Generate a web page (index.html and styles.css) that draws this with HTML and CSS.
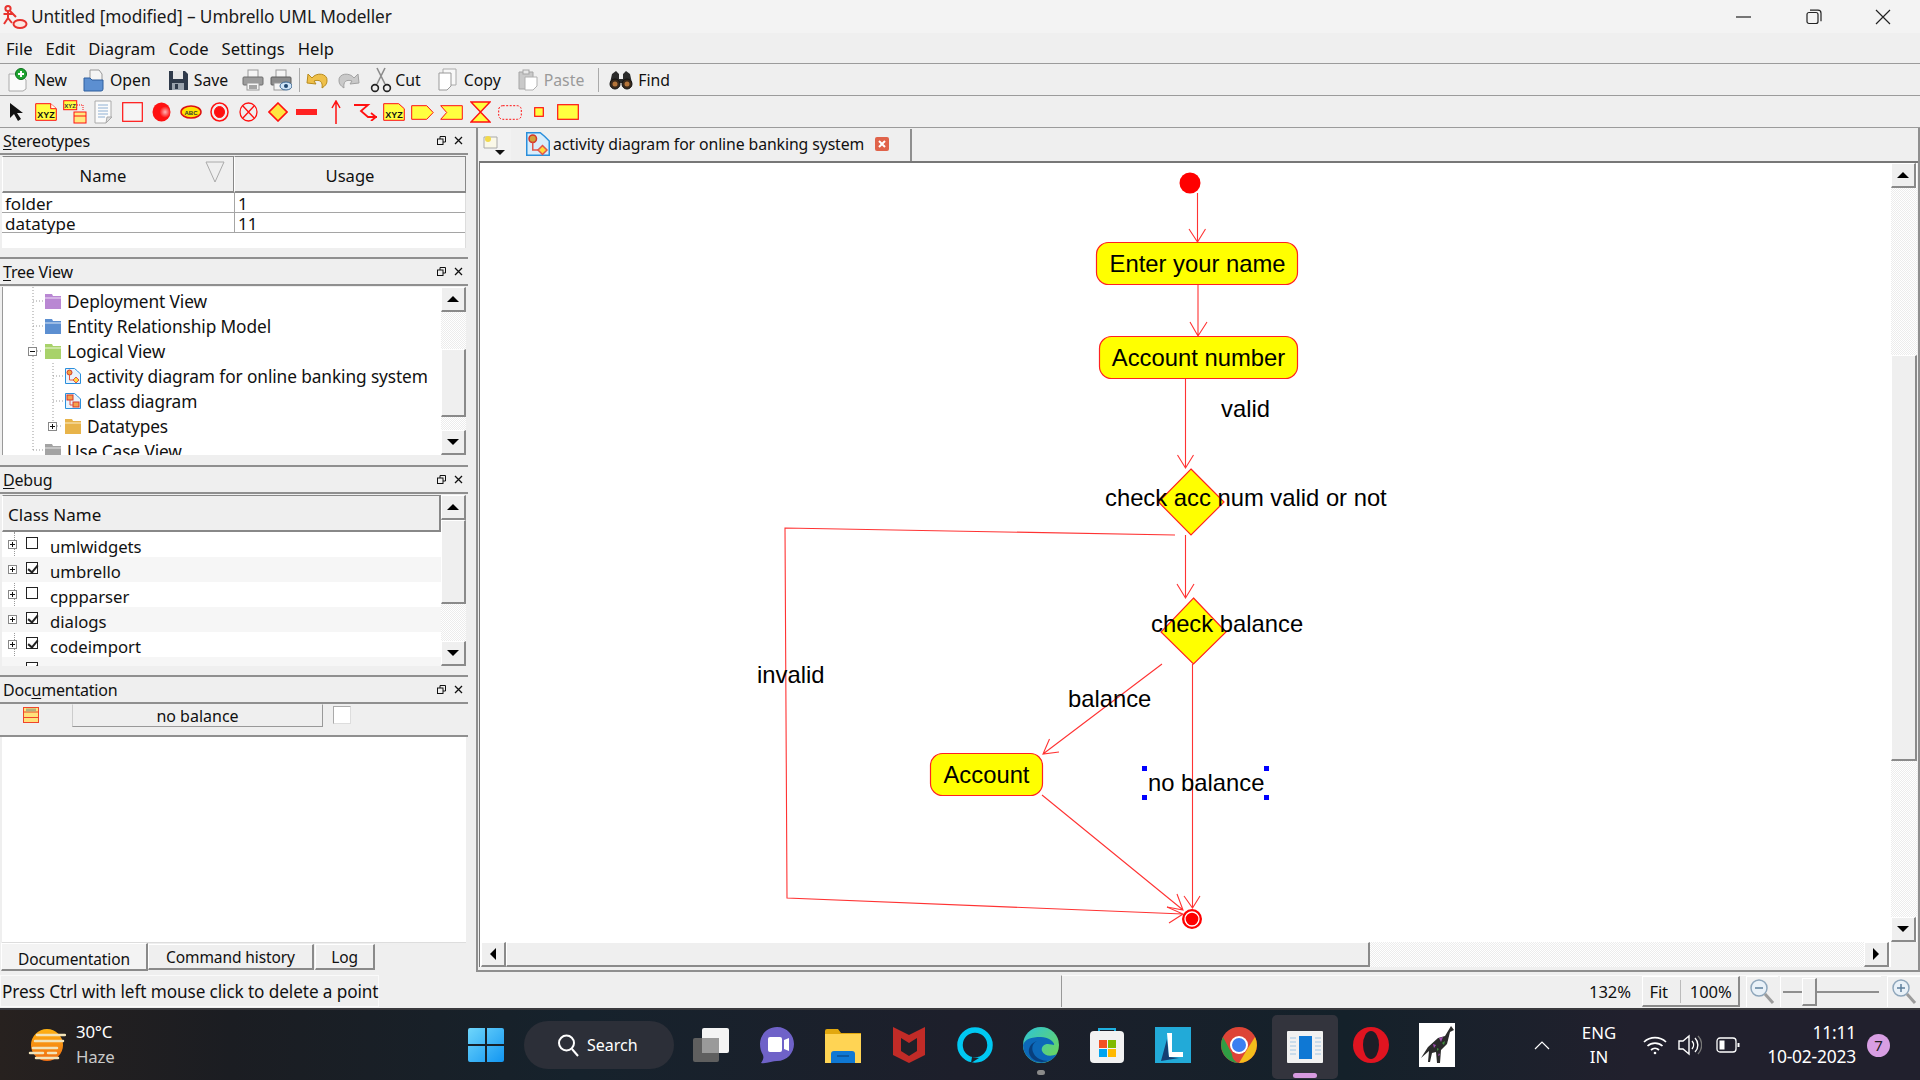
FILE: index.html
```html
<!DOCTYPE html>
<html lang="en">
<head>
<meta charset="utf-8">
<title>Untitled [modified] – Umbrello UML Modeller</title>
<link rel="stylesheet" href="styles.css">
</head>
<body>
<div class="titlebar">
  <svg class="app-icon" width="26" height="26" viewBox="0 0 26 26" fill="none" stroke="#e8332e" stroke-width="2"><circle cx="6" cy="4.5" r="2.6"/><path d="M6 7v7M1.5 10h9M6 14l-4 6M6 14l4 5M8 7l6 6"/><ellipse cx="18" cy="20" rx="6.5" ry="4" fill="#fde6e0"/></svg>
  <span class="title-text">Untitled [modified] – Umbrello UML Modeller</span>
  <div class="win-controls">
    <svg width="16" height="16" viewBox="0 0 16 16"><path d="M0 8h15" stroke="#222" stroke-width="1.2"/></svg>
    <svg width="16" height="16" viewBox="0 0 16 16" fill="none" stroke="#222" stroke-width="1.2"><rect x="1" y="3.5" width="11" height="11" rx="2"/><path d="M4 1.2h8a3 3 0 0 1 3 3v8"/></svg>
    <svg width="16" height="16" viewBox="0 0 16 16"><path d="M1 1l14 14M15 1L1 15" stroke="#222" stroke-width="1.2"/></svg>
  </div>
</div>
<div class="menubar">
  <span>File</span><span>Edit</span><span>Diagram</span><span>Code</span><span>Settings</span><span>Help</span>
</div>
<div class="toolbar">
  <div class="tb-group tb-wide">
    <div class="tb-item"><svg width="22" height="24" viewBox="0 0 22 24"><path d="M2 6h11l6 6v9l-3 2H2z" fill="#fafafa" stroke="#aaa"/><circle cx="14" cy="6" r="5.5" fill="#1fa531" stroke="#0c6f1b"/><path d="M14 3v6M11 6h6" stroke="#fff" stroke-width="2"/></svg><span>New</span></div>
    <div class="tb-item"><svg width="22" height="24" viewBox="0 0 22 24"><path d="M7 2h9l3 4v8H7z" fill="#f5f5f5" stroke="#999"/><path d="M1 10h6l2 2h11v9a2 2 0 0 1-2 2H1z" fill="#5c8fd1" stroke="#2e5f9e"/></svg><span>Open</span></div>
    <div class="tb-item"><svg width="22" height="24" viewBox="0 0 22 24"><path d="M2 3h16l3 3v16H2z" fill="#2f3a4a"/><rect x="6" y="3" width="10" height="8" fill="#e6e6e6"/><rect x="5" y="15" width="12" height="7" fill="#9aa3ad"/><rect x="8" y="16" width="3" height="5" fill="#2f3a4a"/></svg><span>Save</span></div>
  </div>
  <div class="tb-group tb-narrow tb-print">
    <svg width="22" height="24" viewBox="0 0 22 24"><rect x="6" y="2" width="10" height="8" fill="#f5f5f5" stroke="#999"/><rect x="1" y="9" width="20" height="8" rx="1" fill="#9c9c9c" stroke="#6e6e6e"/><rect x="5" y="15" width="12" height="7" fill="#f5f5f5" stroke="#999"/><path d="M7 18h8M7 20h8" stroke="#555"/></svg>
    <svg width="22" height="24" viewBox="0 0 22 24"><rect x="6" y="2" width="10" height="8" fill="#f5f5f5" stroke="#999"/><rect x="1" y="9" width="20" height="8" rx="1" fill="#8c8c8c" stroke="#5e5e5e"/><rect x="4" y="15" width="10" height="7" fill="#f5f5f5" stroke="#999"/><ellipse cx="16" cy="18" rx="6" ry="4" fill="#cfe4f7" stroke="#39638e"/><circle cx="16" cy="18" r="2" fill="#21476f"/></svg>
  </div>
  <div class="tb-sep tb-sep-a"></div>
  <div class="tb-group tb-narrow tb-undo">
    <svg width="24" height="24" viewBox="0 0 24 24" fill="none"><path d="M6 10c4-6 16-5 15 3 0 3-2 5-5 7 1-6-2-9-8-7l2 3-9-1 1-9z" fill="#efc04a" stroke="#b88b1d"/></svg>
    <svg width="24" height="24" viewBox="0 0 24 24" fill="none"><path d="M18 10C14 4 2 5 3 13c0 3 2 5 5 7-1-6 2-9 8-7l-2 3 9-1-1-9z" fill="#c9c9c9" stroke="#a2a2a2"/></svg>
  </div>
  <div class="tb-group tb-wide tb-edit">
    <div class="tb-item tb-close"><svg width="22" height="26" viewBox="0 0 22 26" fill="none" stroke="#8b8b8b" stroke-width="1.6"><path d="M7 1l8 16M15 1L7 17"/><circle cx="5" cy="21" r="3.4" stroke="#222"/><circle cx="17" cy="21" r="3.4" stroke="#222"/></svg><span>Cut</span></div>
    <div class="tb-item"><svg width="22" height="24" viewBox="0 0 22 24"><path d="M6 1h13v16H6z" fill="#f8f8f8" stroke="#aaa"/><path d="M2 5h12v13l-4 4H2z" fill="#fff" stroke="#999"/></svg><span>Copy</span></div>
    <div class="tb-item tb-off"><svg width="22" height="24" viewBox="0 0 22 24"><path d="M2 4h14v17H2z" fill="#c9c9c9" stroke="#a5a5a5"/><rect x="6" y="2" width="6" height="4" fill="#e8e8e8" stroke="#a5a5a5"/><path d="M8 9h12v9l-4 4H8z" fill="#fff" stroke="#b0b0b0"/></svg><span>Paste</span></div>
  </div>
  <div class="tb-sep tb-sep-b"></div>
  <div class="tb-item tb-find"><svg width="24" height="22" viewBox="0 0 24 22"><path d="M3 5l4-3 3 3v5h4V5l3-3 4 3 2 9H1z" fill="#2b2b2b"/><circle cx="6" cy="15" r="5" fill="#3a2a1c" stroke="#111"/><circle cx="18" cy="15" r="5" fill="#3a2a1c" stroke="#111"/><circle cx="6" cy="15" r="2.5" fill="#b5753a"/><circle cx="18" cy="15" r="2.5" fill="#b5753a"/></svg><span>Find</span></div>
</div>
<div class="palette">
  <div class="pal"><svg width="15" height="20" viewBox="0 0 15 20"><path d="M1 1v15l4-4 4 7 3-2-4-6h6z" fill="#111"/></svg></div>
  <div class="pal"><svg width="22" height="18" viewBox="0 0 22 18"><path d="M.7.7h15l5.600 5v11.600H.7z" fill="#ffff40" stroke="#f11"/><path d="M15.700.7v5h5.600" fill="#ffe" stroke="#f11"/><text x="11" y="15" class="xyz">XYZ</text></svg></div>
  <div class="pal"><svg width="24" height="24" viewBox="0 0 24 24"><rect x=".7" y=".7" width="13" height="9" fill="#ffff40" stroke="#f11"/><text x="7" y="8" class="xyz-s">XYZ</text><path d="M14 5h6v6" fill="none" stroke="#f11" stroke-dasharray="1 1"/><rect x="11" y="12" width="12" height="11" fill="#ffe980" stroke="#f11"/><path d="M11 16h12" stroke="#f11"/></svg></div>
  <div class="pal"><svg width="20" height="24" viewBox="0 0 20 24"><path d="M1 1h16v16l-5 6H1z" fill="#fbfbfb" stroke="#aaa"/><path d="M4 5h10M4 8h10M4 11h10M4 14h10M4 17h7" stroke="#8fb0d3"/><path d="M12 23l1-6h5z" fill="#ddd" stroke="#aaa"/></svg></div>
  <div class="pal"><svg width="21" height="20" viewBox="0 0 21 20"><rect x=".7" y=".7" width="19.600" height="18.600" fill="#f5f5f5" stroke="#f11" stroke-width="1.200"/></svg></div>
  <div class="pal"><svg width="19" height="20" viewBox="0 0 19 20"><defs><radialGradient id="rb" cx=".7" cy=".5"><stop offset="0" stop-color="#ffb5b5"/><stop offset=".6" stop-color="#f11"/></radialGradient></defs><ellipse cx="9.500" cy="10" rx="9" ry="9.500" fill="url(#rb)"/></svg></div>
  <div class="pal"><svg width="22" height="14" viewBox="0 0 22 14"><ellipse cx="11" cy="7" rx="10" ry="6" fill="#ffe300" stroke="#d11" stroke-width="1.500"/><text x="11" y="10" class="xyz-s">ABC</text></svg></div>
  <div class="pal"><svg width="19" height="20" viewBox="0 0 19 20" fill="none" stroke="#f11"><ellipse cx="9.500" cy="10" rx="8.500" ry="9" stroke-width="1.500"/><ellipse cx="9.500" cy="10" rx="5" ry="5.500" fill="#f11"/></svg></div>
  <div class="pal"><svg width="19" height="20" viewBox="0 0 19 20" fill="none" stroke="#f11" stroke-width="1.300"><ellipse cx="9.500" cy="10" rx="8.500" ry="9"/><path d="M3.500 3.500l12 13M15.500 3.500l-12 13"/></svg></div>
  <div class="pal"><svg width="20" height="20" viewBox="0 0 20 20"><path d="M10 1l9 9-9 9-9-9z" fill="#ffe640" stroke="#f11" stroke-width="1.600"/></svg></div>
  <div class="pal"><svg width="21" height="6" viewBox="0 0 21 6"><rect width="21" height="6" fill="#f22"/></svg></div>
  <div class="pal"><svg width="10" height="24" viewBox="0 0 10 24" fill="none" stroke="#f11" stroke-width="1.500"><path d="M5 24V1M1 8l4-7 4 7"/></svg></div>
  <div class="pal"><svg width="24" height="18" viewBox="0 0 24 18" fill="none" stroke="#f11" stroke-width="1.800"><path d="M1 2h14l-7 6 7 6h9M18 10l5 4-5 4"/></svg></div>
  <div class="pal"><svg width="22" height="18" viewBox="0 0 22 18"><path d="M.7.7h15l5.600 5v11.600H.7z" fill="#ffff40" stroke="#f11"/><text x="11" y="15" class="xyz">XYZ</text></svg></div>
  <div class="pal"><svg width="23" height="15" viewBox="0 0 23 15"><path d="M.7.7h15l6.500 6.800-6.500 6.800H.7z" fill="#ffff40" stroke="#f11"/></svg></div>
  <div class="pal"><svg width="23" height="15" viewBox="0 0 23 15"><path d="M.7.7h21.600v13.600H.7l6-6.800z" fill="#ffff40" stroke="#f11"/></svg></div>
  <div class="pal"><svg width="21" height="22" viewBox="0 0 21 22"><path d="M1 1h19L1 21h19z" fill="#ffff40" stroke="#f11" stroke-width="1.400"/></svg></div>
  <div class="pal"><svg width="24" height="15" viewBox="0 0 24 15"><rect x=".7" y=".7" width="22.600" height="13.600" rx="4" fill="none" stroke="#f11" stroke-dasharray="2 1.500"/></svg></div>
  <div class="pal"><svg width="10" height="10" viewBox="0 0 10 10"><rect x=".7" y=".7" width="8.600" height="8.600" fill="#ffff40" stroke="#f11" stroke-width="1.200"/></svg></div>
  <div class="pal"><svg width="22" height="16" viewBox="0 0 22 16"><rect x=".7" y=".7" width="20.600" height="14.600" fill="#ffff40" stroke="#f11" stroke-width="1.200"/></svg></div>
</div>

<div class="work">
  <div class="docks">
    <section class="dock dock-stereo">
      <header class="dock-head"><span><u>S</u>tereotypes</span><div class="dock-btns"><svg width="9" height="9" viewBox="0 0 9 9" fill="none" stroke="#111"><rect x=".5" y="3" width="5.500" height="5.500"/><path d="M3 3V.5h5.500V6H6"/></svg><svg width="9" height="9" viewBox="0 0 9 9"><path d="M1 1l7 7M8 1L1 8" stroke="#111" stroke-width="1.300"/></svg></div></header>
      <div class="stereo-panel">
        <div class="table-head">
          <div class="th th-name">Name<svg class="sort" width="20" height="22" viewBox="0 0 20 22"><path d="M1 1h18l-9 20z" fill="none" stroke="#aaa"/></svg></div>
          <div class="th">Usage</div>
        </div>
        <div class="table-row"><div class="td">folder</div><div class="td">1</div></div>
        <div class="table-row"><div class="td">datatype</div><div class="td">11</div></div>
      </div>
    </section>

    <section class="dock dock-tree">
      <header class="dock-head"><span><u>T</u>ree View</span><div class="dock-btns"><svg width="9" height="9" viewBox="0 0 9 9" fill="none" stroke="#111"><rect x=".5" y="3" width="5.500" height="5.500"/><path d="M3 3V.5h5.500V6H6"/></svg><svg width="9" height="9" viewBox="0 0 9 9"><path d="M1 1l7 7M8 1L1 8" stroke="#111" stroke-width="1.300"/></svg></div></header>
      <div class="tree-panel">
        <div class="tree-list">
          <svg class="tree-lines" width="80" height="168" viewBox="0 0 80 168" fill="none" stroke="#999" stroke-dasharray="1 2"><path d="M33 0v163M33 14h10M33 39h10M37 64h6M33 163h10M53 76v63M53 89h10M53 114h10M57 139h6"/></svg>
          <div class="tree-row lvl1"><svg class="folder" width="16" height="16" viewBox="0 0 16 16"><path d="M0 1h7l1 2h8v13H0z" fill="#b987d3"/><path d="M0 5h16" stroke="#f0e0f8"/></svg>Deployment View</div>
          <div class="tree-row lvl1"><svg class="folder" width="16" height="16" viewBox="0 0 16 16"><path d="M0 1h7l1 2h8v13H0z" fill="#5c8fd1"/><path d="M0 5h16" stroke="#dbe8f8"/></svg>Entity Relationship Model</div>
          <div class="tree-row lvl1"><svg class="pm" width="9" height="9" viewBox="0 0 9 9"><rect x=".5" y=".5" width="8" height="8" fill="#fff" stroke="#888"/><path d="M2 4.500h5" stroke="#111"/></svg><svg class="folder" width="16" height="16" viewBox="0 0 16 16"><path d="M0 1h7l1 2h8v13H0z" fill="#a8d26a"/><path d="M0 5h16" stroke="#eef8dc"/></svg>Logical View</div>
          <div class="tree-row lvl2"><svg class="folder" width="16" height="16" viewBox="0 0 16 16"><path d="M.5.500h9l3 2.500 3 3v9.500H.5z" fill="#e8f3fc" stroke="#2a8fdc"/><circle cx="4.500" cy="4.500" r="2.500" fill="#f2a13a" stroke="#d3372c"/><path d="M4.500 7v5h5" stroke="#e2554a" fill="none"/><path d="M11 9l3 3-3 3-3-3z" fill="#ffd83a" stroke="#e2554a"/></svg>activity diagram for online banking system</div>
          <div class="tree-row lvl2"><svg class="folder" width="16" height="16" viewBox="0 0 16 16"><path d="M.5.500h9l3 2.500 3 3v9.500H.5z" fill="#e8f3fc" stroke="#2a8fdc"/><rect x="2" y="2" width="6" height="5" fill="#f5a24d" stroke="#d3372c"/><rect x="8" y="9" width="6" height="5" fill="#f5a24d" stroke="#d3372c"/><path d="M5 7v5h3" stroke="#e2554a" fill="none"/></svg>class diagram</div>
          <div class="tree-row lvl2"><svg class="pm" width="9" height="9" viewBox="0 0 9 9"><rect x=".5" y=".5" width="8" height="8" fill="#fff" stroke="#888"/><path d="M2 4.500h5M4.500 2v5" stroke="#111"/></svg><svg class="folder" width="16" height="16" viewBox="0 0 16 16"><path d="M0 1h7l1 2h8v13H0z" fill="#e8b44a"/><path d="M0 5h16" stroke="#fbeec9"/></svg>Datatypes</div>
          <div class="tree-row lvl1"><svg class="folder" width="16" height="16" viewBox="0 0 16 16"><path d="M0 1h7l1 2h8v13H0z" fill="#a3a3a3"/><path d="M0 5h16" stroke="#e6e6e6"/></svg>Use Case View</div>
        </div>
        <div class="vbar">
          <div class="sb-btn tri-up"></div><div class="hatch hatch-tree"></div><div class="thumb thumb-tree"></div><div class="hatch hatch-fill"></div><div class="sb-btn tri-down"></div>
        </div>
      </div>
    </section>

    <section class="dock dock-debug">
      <header class="dock-head"><span><u>D</u>ebug</span><div class="dock-btns"><svg width="9" height="9" viewBox="0 0 9 9" fill="none" stroke="#111"><rect x=".5" y="3" width="5.500" height="5.500"/><path d="M3 3V.5h5.500V6H6"/></svg><svg width="9" height="9" viewBox="0 0 9 9"><path d="M1 1l7 7M8 1L1 8" stroke="#111" stroke-width="1.300"/></svg></div></header>
      <div class="debug-panel">
        <div class="debug-list">
          <div class="debug-head">Class Name</div>
          <div class="debug-row"><svg class="pm" width="9" height="9" viewBox="0 0 9 9"><rect x=".5" y=".5" width="8" height="8" fill="#fff" stroke="#888"/><path d="M2 4.500h5M4.500 2v5" stroke="#111"/></svg><span class="cb"></span>umlwidgets</div>
          <div class="debug-row alt"><svg class="pm" width="9" height="9" viewBox="0 0 9 9"><rect x=".5" y=".5" width="8" height="8" fill="#fff" stroke="#888"/><path d="M2 4.500h5M4.500 2v5" stroke="#111"/></svg><span class="cb checked"></span>umbrello</div>
          <div class="debug-row"><svg class="pm" width="9" height="9" viewBox="0 0 9 9"><rect x=".5" y=".5" width="8" height="8" fill="#fff" stroke="#888"/><path d="M2 4.500h5M4.500 2v5" stroke="#111"/></svg><span class="cb"></span>cppparser</div>
          <div class="debug-row alt"><svg class="pm" width="9" height="9" viewBox="0 0 9 9"><rect x=".5" y=".5" width="8" height="8" fill="#fff" stroke="#888"/><path d="M2 4.500h5M4.500 2v5" stroke="#111"/></svg><span class="cb checked"></span>dialogs</div>
          <div class="debug-row"><svg class="pm" width="9" height="9" viewBox="0 0 9 9"><rect x=".5" y=".5" width="8" height="8" fill="#fff" stroke="#888"/><path d="M2 4.500h5M4.500 2v5" stroke="#111"/></svg><span class="cb checked"></span>codeimport</div>
          <div class="debug-row alt"><span class="pm-space"></span><span class="cb checked"></span>refactoring</div>
        </div>
        <div class="vbar">
          <div class="sb-btn tri-up"></div><div class="thumb thumb-debug"></div><div class="hatch hatch-fill"></div><div class="sb-btn tri-down"></div>
        </div>
      </div>
    </section>

    <section class="dock dock-doc">
      <header class="dock-head"><span>Doc<u>u</u>mentation</span><div class="dock-btns"><svg width="9" height="9" viewBox="0 0 9 9" fill="none" stroke="#111"><rect x=".5" y="3" width="5.500" height="5.500"/><path d="M3 3V.5h5.500V6H6"/></svg><svg width="9" height="9" viewBox="0 0 9 9"><path d="M1 1l7 7M8 1L1 8" stroke="#111" stroke-width="1.300"/></svg></div></header>
      <div class="doc-bar">
        <svg class="doc-icon" width="16" height="16" viewBox="0 0 16 16"><rect x=".5" y=".5" width="15" height="15" fill="#ffe27a" stroke="#f0452a"/><path d="M.5 5h15M.5 10.500h15" stroke="#f0452a"/><rect x="3" y="1.500" width="10" height="3" fill="#b5b07c"/></svg>
        <div class="doc-name">no balance</div>
        <span class="doc-check"></span>
      </div>
      <div class="doc-text"></div>
      <div class="bottom-tabs">
        <div class="btab btab-on">Documentation</div>
        <div class="btab btab-cmd">Command history</div>
        <div class="btab btab-log">Log</div>
      </div>
    </section>
  </div>

  <div class="central">
    <div class="tabbar">
      <div class="corner-btn"><svg width="24" height="22" viewBox="0 0 24 22"><path d="M1 3h13v11H1z" fill="#faf8e8" stroke="#aaa"/><circle cx="5" cy="5" r="3" fill="#f2d94a"/><path d="M12 16h10l-5 5z" fill="#111"/></svg></div>
      <div class="tab">
        <svg width="24" height="24" viewBox="0 0 16 16"><path d="M.5.500h9l3 2.500 3 3v9.500H.5z" fill="#d9edfb" stroke="#2a8fdc"/><circle cx="4.500" cy="4.500" r="2.500" fill="#d3a13a" stroke="#d3372c"/><path d="M4.500 7v5h5" stroke="#e2554a" fill="none"/><path d="M11 9l3 3-3 3-3-3z" fill="#ffd83a" stroke="#e2554a"/></svg>
        <span>activity diagram for online banking system</span>
        <svg width="14" height="14" viewBox="0 0 14 14"><rect width="14" height="14" rx="2" fill="#e0634a"/><path d="M4 4l6 6M10 4l-6 6" stroke="#fff" stroke-width="2"/></svg>
      </div>
    </div>
    <div class="canvas-frame">
      <div class="canvas">
        <svg class="diagram" width="1411" height="779" viewBox="480 163 1411 779">
          <g class="conn">
            <path d="M1197.500 193V242M1189 229l8.500 13 8-13"/>
            <path d="M1198 285V336M1190 322l8 14 9-14"/>
            <path d="M1185.500 379V468M1177.500 455l8 13 8-13"/>
            <path d="M1185.500 535V598M1177 584l8.500 14 8.500-14"/>
            <path d="M1175 535L785 528L787 898L1183 914M1167 907l16 7-14 9"/>
            <path d="M1162 664L1043 754M1049.500 739l-6.500 15 16-2"/>
            <path d="M1192.500 664V908M1184 896l8.500 12 7.500-12"/>
            <path d="M1042 795L1183 910M1177 894l6 16-16-3"/>
          </g>
          <circle cx="1190" cy="183" r="10.500" fill="#f00"/>
          <g class="node">
            <rect x="1096.500" y="242.500" width="201" height="42" rx="12"/>
            <rect x="1099.500" y="336.500" width="198" height="42" rx="12"/>
            <rect x="930.500" y="753.500" width="112" height="42" rx="12"/>
            <path d="M1191 469l33 33-33 33-32.500-33z"/>
            <path d="M1193.500 598l32.500 34-32.500 32-32.500-32z"/>
          </g>
          <circle cx="1192" cy="919" r="9" fill="#f00" stroke="#f00" stroke-width="2"/>
          <circle cx="1192" cy="919" r="7" fill="none" stroke="#fff" stroke-width="1.300"/>
          <g class="label">
            <text x="1197.500" y="272" text-anchor="middle">Enter your name</text>
            <text x="1198.500" y="366" text-anchor="middle">Account number</text>
            <text x="986.500" y="783" text-anchor="middle">Account</text>
            <text x="1221" y="417">valid</text>
            <text x="1105" y="506">check acc num valid or not</text>
            <text x="1151" y="632">check balance</text>
            <text x="1068" y="707">balance</text>
            <text x="757" y="683">invalid</text>
            <text x="1148" y="791">no balance</text>
          </g>
          <g fill="#00f">
            <rect x="1142" y="766" width="5" height="5"/><rect x="1264" y="766" width="5" height="5"/>
            <rect x="1142" y="795" width="5" height="5"/><rect x="1264" y="795" width="5" height="5"/>
          </g>
        </svg>
      </div>
      <div class="vbar vbar-main">
        <div class="sb-btn tri-up"></div><div class="hatch hatch-main"></div><div class="thumb thumb-main"></div><div class="hatch hatch-fill"></div><div class="sb-btn tri-down"></div>
      </div>
      <div class="hbar">
        <div class="sb-btn tri-left"></div><div class="thumb-h"></div><div class="hatch hatch-fill"></div><div class="sb-btn tri-right"></div>
      </div>
      <div class="sb-corner"></div>
    </div>
  </div>
</div>

<div class="statusbar">
  <div class="status-msg">Press Ctrl with left mouse click to delete a point</div>
  <div class="status-zoom">
    <span class="zoom-val">132%</span>
    <div class="zoom-btns"><span>Fit</span><span class="zoom-100">100%</span></div>
    <div class="zoom-icon"><svg width="26" height="28" viewBox="0 0 26 28" fill="none"><circle cx="10" cy="10" r="8" fill="#e9f1f8" stroke="#8ea6bb" stroke-width="1.500"/><path d="M6 10h8" stroke="#5d7f9c" stroke-width="1.500"/><path d="M16 16l8 9" stroke="#9c9c9c" stroke-width="3"/></svg></div>
    <div class="zoom-slider"><span class="slider-knob"></span></div>
    <div class="zoom-icon"><svg width="26" height="28" viewBox="0 0 26 28" fill="none"><circle cx="10" cy="10" r="8" fill="#e9f1f8" stroke="#8ea6bb" stroke-width="1.500"/><path d="M6 10h8M10 6v8" stroke="#5d7f9c" stroke-width="1.500"/><path d="M16 16l8 9" stroke="#9c9c9c" stroke-width="3"/></svg></div>
  </div>
</div>

<div class="taskbar">
  <div class="weather">
    <svg width="38" height="38" viewBox="0 0 38 38"><defs><linearGradient id="sun" x1="0" y1="0" x2="0" y2="1"><stop offset="0" stop-color="#ffb312"/><stop offset="1" stop-color="#ef6c12"/></linearGradient></defs><circle cx="19" cy="19" r="16" fill="url(#sun)"/><path d="M9 9h28M7 15h28M5 22h24M2 27h13M20 27h8M8 32h22" stroke="#f2e3b8" stroke-width="2.500" stroke-linecap="round"/></svg>
    <div class="weather-text"><span>30°C</span><span class="haze">Haze</span></div>
  </div>
  <div class="start"><svg width="36" height="36" viewBox="0 0 36 36"><defs><linearGradient id="win" x1="0" y1="0" x2="1" y2="1"><stop offset="0" stop-color="#6fd6fb"/><stop offset="1" stop-color="#1296f2"/></linearGradient></defs><path d="M2 1h15v16H0V3a2 2 0 0 1 2-2zM19 1h15a2 2 0 0 1 2 2v14H19zM0 19h17v16H2a2 2 0 0 1-2-2zM19 19h17v14a2 2 0 0 1-2 2H19z" fill="url(#win)"/></svg></div>
  <div class="search"><svg width="22" height="24" viewBox="0 0 22 24" fill="none" stroke="#fff" stroke-width="2"><circle cx="9.500" cy="10" r="7.500"/><path d="M15 16l6 7"/></svg><span>Search</span></div>
  <div class="apps">
    <div class="app"><svg width="38" height="36" viewBox="0 0 38 36"><rect x="1" y="11" width="26" height="24" rx="2" fill="#5f5f5f"/><rect x="10" y="1" width="27" height="25" rx="2" fill="#f4f4f4"/><rect x="10" y="11" width="17" height="15" fill="#9a9a9a"/></svg></div>
    <div class="app"><svg width="36" height="38" viewBox="0 0 36 38"><path d="M18 1c10 0 17 8 17 17s-7 17-17 17c-4 0-11 3-16 2 2-3 3-5 2-8-2-3-3-7-3-11C1 9 8 1 18 1z" fill="#6f62c8"/><rect x="9" y="11" width="14" height="15" rx="2" fill="#fff"/><path d="M25 14l5-2v13l-5-2z" fill="#fff"/></svg></div>
    <div class="app"><svg width="36" height="36" viewBox="0 0 36 36"><path d="M0 4a2 2 0 0 1 2-2h11l3 4h20v30H0z" fill="#e2a80e"/><rect y="7" width="36" height="29" fill="#ffd454"/><path d="M6 36V27a3 3 0 0 1 3-3h18a3 3 0 0 1 3 3v9z" fill="#0f78d4"/><path d="M12 29h12" stroke="#0b4f92" stroke-width="1.500"/></svg></div>
    <div class="app"><svg width="32" height="36" viewBox="0 0 32 36"><path d="M0 0l16 8 16-8v28l-16 8L0 28z" fill="#c12b27"/><path d="M8 11l8 5 8-5v13l-8 5-8-5z" fill="#1f2129"/></svg></div>
    <div class="app"><svg width="36" height="36" viewBox="0 0 36 36" fill="none"><circle cx="18" cy="18" r="15" stroke="#00c8f2" stroke-width="5.500"/><path d="M14 36l1-6 7 1z" fill="#1f2129"/></svg></div>
    <div class="app"><svg width="36" height="36" viewBox="0 0 36 36"><defs><linearGradient id="eg" x1="0" y1="0" x2="1" y2="1"><stop offset="0" stop-color="#2cc3d8"/><stop offset="1" stop-color="#73d84d"/></linearGradient></defs><circle cx="18" cy="18" r="18" fill="url(#eg)"/><path d="M0 18a18 18 0 0 0 26 16c3-1 6-4 8-7-6 3-13 2-15-3-1-3 1-7 6-7 2 0 5 1 6 1 1-3-6-8-13-8C8 10 2 12 0 18z" fill="#0c68b8"/><path d="M14 14c-5 2-6 8-3 13 2 4 8 7 14 7-9 3-17-1-19-8-1-5 2-10 8-12z" fill="#083f7d"/></svg></div>
    <div class="app"><svg width="36" height="38" viewBox="0 0 36 38"><path d="M10 8V3h16v5" fill="none" stroke="#1fb0e0" stroke-width="2"/><rect x="1" y="5" width="34" height="32" rx="4" fill="#f2f2f2"/><rect x="10" y="14" width="8" height="8" fill="#f25022"/><rect x="19" y="14" width="8" height="8" fill="#7fba00"/><rect x="10" y="23" width="8" height="8" fill="#00a4ef"/><rect x="19" y="23" width="8" height="8" fill="#ffb900"/></svg></div>
    <div class="app"><svg width="36" height="36" viewBox="0 0 36 36"><rect width="36" height="36" fill="#22aad8"/><path d="M12 12L6 34l18-3-10-1z" fill="#153f73"/><path d="M12 6h5v19h11v5H14z" fill="#fff"/></svg></div>
    <div class="app"><svg width="36" height="36" viewBox="0 0 36 36"><circle cx="18" cy="18" r="18" fill="#dd4436"/><path d="M18 36a18 18 0 0 1-16-26l9 17a9 9 0 0 0 7 9z" fill="#2f9e44"/><path d="M18 36l9-15 7-11a18 18 0 0 1-16 26z" fill="#f4bd1b"/><circle cx="18" cy="18" r="9" fill="#fff"/><circle cx="18" cy="18" r="7" fill="#3c7ff0"/></svg></div>
    <div class="app app-active"><svg width="36" height="32" viewBox="0 0 36 32"><rect width="36" height="32" rx="1" fill="#f1f1f1"/><rect x="12" y="5" width="13" height="23" fill="#0f78d4"/><path d="M3 7h6M3 11h6M3 15h6M3 19h6M3 23h6M28 7h6M28 11h6M28 15h6M28 19h6M28 23h6" stroke="#bcd3e8" stroke-width="1.500"/></svg><span class="run run-pink"></span></div>
    <div class="app"><svg width="36" height="36" viewBox="0 0 36 36"><circle cx="18" cy="18" r="18" fill="#e01420"/><ellipse cx="18" cy="18" rx="8" ry="14" fill="#1d1e27"/></svg></div>
    <div class="app"><svg width="36" height="44" viewBox="0 0 36 44"><rect width="36" height="44" fill="#fff"/><path d="M32 3l3 4-4 2-3 12-6 6-1 13h-3l-1-11-4 1-2 9h-2l1-11-8 7 7-11 10-9 7-2z" fill="#2b2b2b"/><path d="M20 15l4-1-2 5zM14 21l3 1-2 3zM20 30l1 2-2 1z" fill="#a24fb0"/><path d="M23 20l3-2-1 4zM18 25l2 1-2 2z" fill="#3f8f3c"/></svg></div>
  </div>
  <div class="tray">
    <svg class="chev" width="16" height="9" viewBox="0 0 16 9" fill="none"><path d="M1 8l7-7 7 7" stroke="#fff" stroke-width="1.200"/></svg>
    <div class="lang"><span>ENG</span><span>IN</span></div>
    <svg class="wifi" width="24" height="20" viewBox="0 0 24 20" fill="none" stroke="#fff" stroke-width="1.700"><path d="M1 7a16 16 0 0 1 22 0M4.500 11a11 11 0 0 1 15 0M8 15a6 6 0 0 1 8 0"/><circle cx="12" cy="18" r="1.300" fill="#fff" stroke="none"/></svg>
    <svg class="vol" width="24" height="22" viewBox="0 0 24 22" fill="none" stroke="#fff" stroke-width="1.400"><path d="M1 7h4l6-5v18l-6-5H1z"/><path d="M14 7a6 6 0 0 1 0 8M17 4a10 10 0 0 1 0 14"/><path d="M20 2a13 13 0 0 1 0 18" stroke="#777"/></svg>
    <svg class="batt" width="24" height="16" viewBox="0 0 24 16" fill="none" stroke="#fff" stroke-width="1.300"><rect x="1" y="1" width="19" height="14" rx="3"/><rect x="3.500" y="3.500" width="5" height="9" fill="#fff" stroke="none"/><path d="M22.500 6v4" stroke-width="2"/></svg>
    <div class="clock"><span>11:11</span><span>10-02-2023</span></div>
    <span class="badge">7</span>
  </div>
</div>
</body>
</html>
```

FILE: styles.css
```css
* { box-sizing: border-box; }
html, body { margin: 0; padding: 0; }
body {
  width: 1920px; height: 1080px; overflow: hidden;
  background: #efefef; color: #111;
  font-family: "Noto Sans", "Open Sans", sans-serif;
  font-size: 16px;
  display: flex; flex-direction: column;
}
svg { display: block; flex: none; }
u { text-underline-offset: 2px; }

/* Title and menus */
.titlebar { height: 33px; background: #f3f3f3; display: flex; align-items: center; padding-left: 2px; position: relative; flex: none; }
.title-text { margin-left: 3px; font-size: 17.3px; letter-spacing: -0.1px; color: #1a1a1a; }
.win-controls { margin-left: auto; display: flex; gap: 53.5px; padding-right: 29px; }
.menubar { height: 31px; flex: none; border-bottom: 1px solid #9b9b9b; display: flex; align-items: center; padding: 1px 0 0 6px; gap: 13px; font-size: 16.6px; }
.toolbar { height: 32px; flex: none; border-bottom: 1px solid #9b9b9b; display: flex; align-items: center; padding: 1px 0 0 7px; font-size: 15.8px; }
.tb-group { display: flex; align-items: center; }
.tb-wide { gap: 16px; }
.tb-narrow { gap: 6px; }
.tb-print { margin-left: 14px; }
.tb-undo { margin-left: 6px; }
.tb-edit { margin-left: 10px; }
.tb-item { display: flex; align-items: center; gap: 5px; }
.tb-close { gap: 3px; }
.tb-off { color: #9a9a9a; }
.tb-sep { width: 1px; height: 24px; background: #aaa; }
.tb-sep-a { margin-left: 7px; }
.tb-sep-b { margin-left: 14px; }
.tb-find { margin-left: 10px; }
.palette { height: 32px; flex: none; border-bottom: 1px solid #9b9b9b; display: flex; align-items: center; padding: 1px 0 0 2px; }
.pal { width: 29px; display: flex; justify-content: center; align-items: center; }
.xyz { font: bold 9px "Liberation Sans", sans-serif; text-anchor: middle; fill: #111; }
.xyz-s { font: bold 6px "Liberation Sans", sans-serif; text-anchor: middle; fill: #333; }

/* Work area */
.work { height: 847px; flex: none; display: flex; }
.docks { width: 468px; flex: none; display: flex; flex-direction: column; }
.dock { border-bottom: 2px solid #8f8f8f; display: flex; flex-direction: column; }
.dock-stereo { height: 131px; }
.dock-tree { height: 208px; }
.dock-debug { height: 210px; }
.dock-doc { height: 298px; border-bottom: 0; }
.dock-head { height: 27px; flex: none; display: flex; align-items: center; justify-content: space-between; padding: 1px 5px 0 3px; border-bottom: 2px solid #8f8f8f; font-size: 16px; letter-spacing: -0.2px; }
.dock-btns { display: flex; gap: 8px; margin-top: -2px; }

.stereo-panel { margin: 1px 2px 0 2px; height: 92px; background: #fff; border-right: 1px solid #ddd; }
.table-head { display: grid; grid-template-columns: 232px 232px; height: 37px; background: #efefef; font-size: 16.6px; }
.th { position: relative; display: flex; align-items: center; justify-content: center; border: 1px solid #888; border-bottom-width: 2px; border-left-color: #fff; padding-top: 2px; }
.th-name { padding-right: 30px; }
.sort { position: absolute; left: 202px; top: 4px; }
.table-row { display: grid; grid-template-columns: 232px 232px; height: 20px; border-bottom: 1px solid #a5a5a5; }
.td { padding-left: 3px; line-height: 21px; height: 19px; font-size: 17px; }
.td + .td { border-left: 1px solid #a5a5a5; }

.tree-panel { margin: 1px 2px 0 2px; height: 168px; background: #fff; display: flex; overflow: hidden; border-left: 1px solid #999; }
.tree-list { flex: 1; position: relative; overflow: hidden; margin-left: -1px; }
.tree-lines { position: absolute; left: -2px; top: 0; }
.tree-row { height: 25px; display: flex; align-items: center; gap: 6px; white-space: nowrap; position: relative; padding-top: 2px; font-size: 17.3px; letter-spacing: -0.1px; }
.lvl1 { padding-left: 43px; }
.lvl2 { padding-left: 63px; }
.tree-row .pm { position: absolute; margin-left: -17px; top: 9px; }
.tree-row .folder { margin-top: -1px; }
.tree-row:first-of-type { margin-top: 1px; }

.vbar { width: 25px; flex: none; display: flex; flex-direction: column; background: #fff; }
.sb-btn { position: relative; width: 25px; height: 25px; flex: none; background: #efefef; border: 1px solid #fff; border-right: 2px solid #8a8a8a; border-bottom: 2px solid #8a8a8a; }
.sb-btn::after { content: ""; position: absolute; left: 50%; top: 50%; width: 0; height: 0; border: 6px solid transparent; }
.tri-up::after { border-bottom-color: #000; border-top-width: 0; transform: translate(-50%, -50%); }
.tri-down::after { border-top-color: #000; border-bottom-width: 0; transform: translate(-50%, -50%); }
.tri-left::after { border-right-color: #000; border-left-width: 0; transform: translate(-50%, -50%); }
.tri-right::after { border-left-color: #000; border-right-width: 0; transform: translate(-50%, -50%); }
.hatch { background: repeating-conic-gradient(#ececec 0 25%, #fff 0 50%) 0 0 / 2px 2px; flex: none; }
.hatch-fill { flex: 1; }
.hatch-tree { height: 37px; }
.hatch-main { height: 167px; }
.thumb { flex: none; background: #efefef; border: 1px solid #fff; border-right: 2px solid #8a8a8a; border-bottom: 2px solid #8a8a8a; }
.thumb-tree { height: 68px; }
.thumb-debug { height: 84px; }
.thumb-main { height: 406px; }

.debug-panel { margin: 1px 2px 0 2px; height: 171px; background: #fff; display: flex; overflow: hidden; }
.debug-list { flex: 1; overflow: hidden; position: relative; }
.debug-list::before { content: ""; position: absolute; left: 12px; top: 37px; bottom: 0; border-left: 1px dotted #999; }
.debug-head { height: 37px; background: #efefef; border: 1px solid #888; border-bottom-width: 2px; border-right-width: 2px; border-left-color: #fff; display: flex; align-items: center; padding: 2px 0 0 5px; font-size: 17px; }
.debug-row { height: 25px; display: flex; align-items: center; padding: 3px 0 0 6px; white-space: nowrap; font-size: 16.7px; position: relative; }
.debug-row.alt { background: #f6f6f6; }
.debug-row .pm { position: relative; top: -2px; z-index: 1; }
.pm-space { width: 9px; }
.cb { width: 12px; height: 12px; border: 1px solid #222; background: #fff; margin: -7px 12px 0 9px; position: relative; flex: none; }
.cb.checked::after { content: ""; position: absolute; left: 3px; top: 0; width: 4px; height: 8px; border: solid #222; border-width: 0 2px 2px 0; transform: rotate(40deg); }

.doc-bar { height: 33px; flex: none; display: flex; align-items: flex-start; border-bottom: 2px solid #8f8f8f; }
.doc-icon { margin: 3px 0 0 23px; }
.doc-name { width: 251px; height: 23px; margin-left: 33px; background: #efefef; border: 1px solid transparent; border-right: 1px solid #999; border-bottom: 1px solid #999; border-left: 1px solid #ccc; text-align: center; line-height: 22px; font-size: 16px; }
.doc-check { width: 18px; height: 18px; margin: 2px 0 0 10px; background: #fff; border: 1px solid #aaa; border-right-color: #ddd; border-bottom-color: #ddd; }
.doc-text { height: 206px; margin: 0 2px; background: #fff; flex: none; border-bottom: 1px solid #ddd; }
.bottom-tabs { display: flex; align-items: flex-start; padding-left: 1px; font-size: 15.5px; letter-spacing: -0.1px; }
.btab { border: 1px solid #fff; border-right: 2px solid #8a8a8a; border-bottom: 2px solid #8a8a8a; text-align: center; height: 26px; line-height: 25px; margin-top: 1px; }
.btab-on { width: 147px; height: 28px; margin-top: 0; line-height: 30px; background: #f3f3f3; }
.btab-cmd { width: 166px; }
.btab-log { width: 60px; margin-left: 1px; }

/* Central area */
.central { width: 1444px; margin-left: 8px; height: 844px; display: flex; flex-direction: column; border-left: 2px solid #8f8f8f; border-right: 2px solid #8f8f8f; border-bottom: 2px solid #8f8f8f; padding-left: 1px; }
.tabbar { height: 33px; flex: none; display: flex; align-items: flex-end; }
.corner-btn { width: 32px; height: 32px; display: flex; align-items: center; padding-left: 4px; background: #f2f2f2; }
.tab { width: 401px; height: 32px; display: flex; align-items: center; gap: 3px; padding: 0 0 3px 15px; border-right: 2px solid #8f8f8f; background: #efefef; font-size: 15.8px; letter-spacing: -0.1px; white-space: nowrap; }
.tab svg:last-child { margin-left: 8px; }
.canvas-frame { display: grid; grid-template-columns: 1411px 26px; grid-template-rows: 779px 25px; border-top: 2px solid #777; border-left: 1px solid #777; }
.canvas { background: #fff; overflow: hidden; }
.diagram .conn { fill: none; stroke: #f33; stroke-width: 1.100; }
.diagram .node rect, .diagram .node path { fill: #ff0; stroke: #f22; stroke-width: 1.200; }
.diagram .label { font-family: "Liberation Sans", Arial, sans-serif; font-size: 23.8px; fill: #000; }
.vbar-main { width: 26px; }
.vbar-main .sb-btn { width: 25px; }
.hbar { display: flex; background: #fff; padding: 0 2px 0 1px; }
.hbar .sb-btn { height: 25px; width: 25px; }
.thumb-h { width: 864px; height: 25px; background: #efefef; border: 1px solid #fff; border-right: 2px solid #8a8a8a; border-bottom: 2px solid #8a8a8a; flex: none; }
.sb-corner { background: #efefef; }

/* Status */
.statusbar { height: 33px; flex: none; display: flex; font-size: 16.6px; letter-spacing: -0.1px; }
.status-msg { width: 379px; height: 32px; display: flex; align-items: center; padding-left: 1px; border: 1px solid #fafafa; white-space: nowrap; font-size: 17.2px; }
.status-zoom { margin-left: 682px; width: 859px; height: 32px; display: flex; align-items: center; border-top: 1px solid #fafafa; border-left: 1px solid #999; }
.zoom-val { margin-left: 527px; width: 54px; }
.zoom-btns { width: 98px; height: 31px; display: flex; align-items: center; justify-content: space-around; background: #efefef; border: 1px solid #fff; border-right: 2px solid #8a8a8a; border-bottom: 2px solid #8a8a8a; }
.zoom-100 { border-left: 1px solid #bbb; padding-left: 9px; }
.zoom-icon { width: 33px; height: 31px; margin-left: 6px; display: flex; align-items: center; justify-content: center; border-left: 1px solid #fff; border-top: 1px solid #fff; }
.zoom-slider { width: 102px; height: 31px; position: relative; margin-left: 2px; border-left: 1px solid #fff; border-top: 1px solid #fff; }
.zoom-slider::before { content: ""; position: absolute; left: 2px; right: 2px; top: 14px; height: 2px; background: #8f8f8f; }
.slider-knob { position: absolute; left: 21px; top: 1px; width: 15px; height: 28px; background: #efefef; border: 1px solid #fff; border-right: 2px solid #8a8a8a; border-bottom: 2px solid #8a8a8a; }

/* Taskbar */
.taskbar { height: 72px; flex: none; position: relative; display: flex; align-items: center; color: #fff; font-size: 16px; border-top: 2px solid #3a3a3e; background: linear-gradient(90deg, #27211f 0, #1b1d22 12%, #16222c 30%, #1d1f2b 50%, #14212a 70%, #21202d 85%, #21202d 100%); }
.weather { width: 468px; display: flex; align-items: center; padding-left: 28px; gap: 10px; flex: none; }
.weather-text { display: flex; flex-direction: column; line-height: 25px; font-size: 16.8px; letter-spacing: -0.2px; margin-top: -2px; }
.haze { color: #c9c9c9; }
.start { width: 36px; flex: none; }
.search { width: 150px; height: 48px; margin-left: 20px; border-radius: 24px; background: #2c2f38; display: flex; align-items: center; gap: 8px; padding-left: 33px; flex: none; font-size: 16px; }
.apps { display: flex; margin-left: 4px; height: 70px; flex: none; }
.app { width: 66px; position: relative; display: flex; align-items: center; justify-content: center; }
.app-active { background: #33343d; border-radius: 5px; margin: 5px 0 1px; }
.app:nth-child(6)::after { content: ""; position: absolute; left: 29px; bottom: 5px; width: 8px; height: 5px; border-radius: 3px; background: #8a8a8a; }
.run { position: absolute; left: 21px; bottom: 1px; width: 24px; height: 5px; border-radius: 3px; }
.run-pink { background: #d79be0; }
.tray { flex: 1; display: flex; align-items: center; }
.chev { margin-left: 64px; }
.lang { margin-left: 31px; width: 36px; display: flex; flex-direction: column; align-items: center; line-height: 24px; font-size: 16.8px; }
.wifi { margin-left: 26px; }
.vol { margin-left: 11px; }
.batt { margin-left: 14px; }
.clock { margin-left: 18px; width: 98px; display: flex; flex-direction: column; align-items: flex-end; line-height: 24px; font-size: 17.4px; letter-spacing: -0.2px; white-space: nowrap; margin-top: -2px; }
.badge { width: 23px; height: 23px; margin-left: 11px; border-radius: 50%; background: #d89ee3; color: #222; display: flex; align-items: center; justify-content: center; font-size: 15px; }
```
